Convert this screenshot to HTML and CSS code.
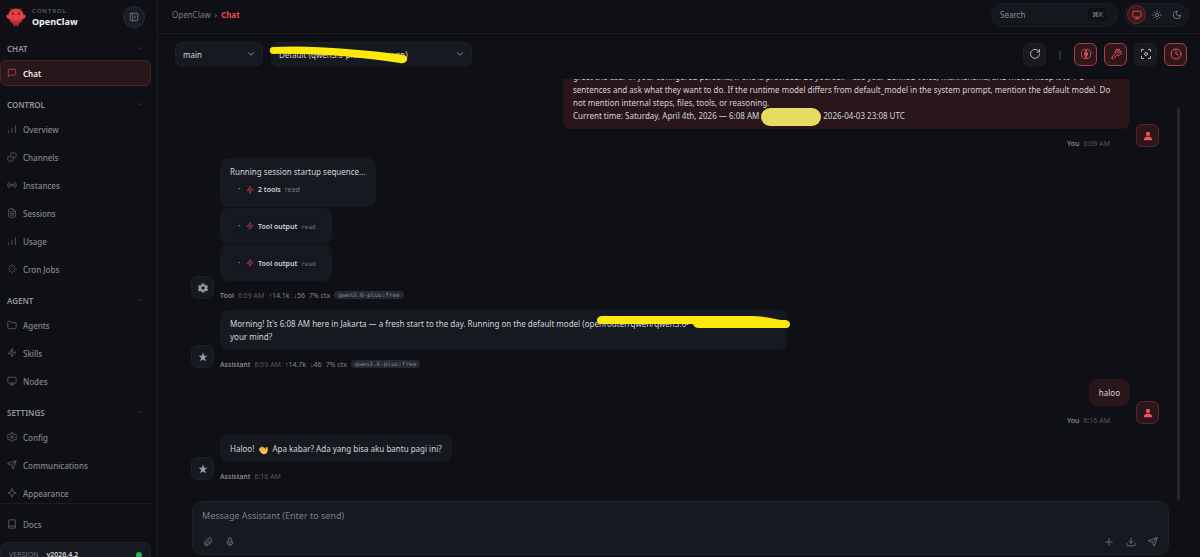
FILE: index.html
```html
<!DOCTYPE html>
<html lang="en">
<head>
  <meta charset="UTF-8" />
  <meta name="viewport" content="width=device-width, initial-scale=1.0"/>
  <title>OpenClaw Control</title>
  <link rel="stylesheet" href="styles.css">
</head>
<body>
  <!-- shared icons -->
  <svg class="sprite" aria-hidden="true">
    <symbol id="i-down" viewBox="0 0 24 24"><path d="m6 9 6 6 6-6"/></symbol>
    <symbol id="i-bars" viewBox="0 0 24 24"><path d="M4 20v-4M12 20V10M20 20V4"/></symbol>
    <symbol id="i-bolt" viewBox="0 0 24 24"><path d="M13 2 3 14h9l-1 8 10-12h-9z"/></symbol>
    <symbol id="i-monitor" viewBox="0 0 24 24"><rect x="2" y="3" width="20" height="14" rx="2"/><path d="M8 21h8M12 17v4"/></symbol>
    <symbol id="i-send" viewBox="0 0 24 24"><path d="m22 2-7 20-4-9-9-4zM22 2 11 13"/></symbol>
    <symbol id="i-user" viewBox="0 0 24 24"><circle cx="12" cy="7" r="5"/><path d="M2 22c0-6 4-9 10-9s10 3 10 9z"/></symbol>
    <symbol id="i-star" viewBox="0 0 24 24"><path d="m12 1 3 8h8l-6.500 5 2.500 9-7-5-7 5 2.500-9L1 9h8z"/></symbol>
  </svg>

  <div class="shell">
    <aside class="sidebar">
      <div class="brand">
        <svg class="logo" viewBox="0 0 40 40">
          <path d="M12 5 9 2M28 5l3-3" stroke="#c93536" stroke-width="2"/>
          <path d="M20 3c9 0 15 6 15 13 4-1 5 1 4 4s-4 4-6 4c-1 5-4 8-8 9v4h-4v-3h-2v3h-4v-4c-4-1-7-4-8-9-2 0-5-1-6-4s0-5 4-4C5 9 11 3 20 3z" fill="#e0403f"/>
          <path d="M33 24c-1 5-4 8-8 9v4h-4v-3h-2v3h-4v-4c-4-1-7-4-8-9 7 5 19 5 26 0z" fill="#b93034"/>
          <circle cx="14" cy="13" r="2" fill="#3a1216"/><circle cx="26" cy="13" r="2" fill="#3a1216"/>
        </svg>
        <div class="brand-text">
          <span class="brand-sub">CONTROL</span>
          <span class="brand-name">OpenClaw</span>
        </div>
        <button class="collapse" aria-label="Collapse sidebar">
          <svg class="icon" viewBox="0 0 24 24"><rect x="3" y="3" width="18" height="18" rx="2"/><path d="M9 3v18M16 9l-3 3 3 3"/></svg>
        </button>
      </div>

      <nav class="nav">
        <section class="nav-group">
          <h2>CHAT <svg class="icon chev"><use href="#i-down"/></svg></h2>
          <a href="#chat" class="active"><svg class="icon" viewBox="0 0 24 24"><path d="M21 15a2 2 0 0 1-2 2H7l-4 4V5a2 2 0 0 1 2-2h14a2 2 0 0 1 2 2z"/></svg>Chat</a>
        </section>
        <section class="nav-group">
          <h2>CONTROL <svg class="icon chev"><use href="#i-down"/></svg></h2>
          <a href="#overview"><svg class="icon"><use href="#i-bars"/></svg>Overview</a>
          <a href="#channels"><svg class="icon" viewBox="0 0 24 24"><path d="M9 8V6a4 4 0 0 1 4-4h5a4 4 0 0 1 4 4v4a4 4 0 0 1-4 4h-3M15 16v2a4 4 0 0 1-4 4H6a4 4 0 0 1-4-4v-4a4 4 0 0 1 4-4h3M9 15l6-6"/></svg>Channels</a>
          <a href="#instances"><svg class="icon" viewBox="0 0 24 24"><circle cx="12" cy="12" r="2"/><path d="M4 5c-3 4-3 10 0 14M8 8c-2 2-2 6 0 8M16 8c2 2 2 6 0 8M20 5c3 4 3 10 0 14"/></svg>Instances</a>
          <a href="#sessions"><svg class="icon" viewBox="0 0 24 24"><path d="M14 2H6a2 2 0 0 0-2 2v16a2 2 0 0 0 2 2h12a2 2 0 0 0 2-2V8zM14 2v6h6M8 13h8M8 17h8M8 9h2"/></svg>Sessions</a>
          <a href="#usage"><svg class="icon"><use href="#i-bars"/></svg>Usage</a>
          <a href="#cron"><svg class="icon" viewBox="0 0 24 24"><path d="M12 2v4M12 18v4M2 12h4M18 12h4M5 5l3 3M16 16l3 3M5 19l3-3M16 8l3-3"/></svg>Cron Jobs</a>
        </section>
        <section class="nav-group">
          <h2>AGENT <svg class="icon chev"><use href="#i-down"/></svg></h2>
          <a href="#agents"><svg class="icon" viewBox="0 0 24 24"><path d="M22 19a2 2 0 0 1-2 2H4a2 2 0 0 1-2-2V5a2 2 0 0 1 2-2h5l2 3h9a2 2 0 0 1 2 2z"/></svg>Agents</a>
          <a href="#skills"><svg class="icon"><use href="#i-bolt"/></svg>Skills</a>
          <a href="#nodes"><svg class="icon"><use href="#i-monitor"/></svg>Nodes</a>
        </section>
        <section class="nav-group">
          <h2>SETTINGS <svg class="icon chev"><use href="#i-down"/></svg></h2>
          <a href="#config"><svg class="icon" viewBox="0 0 24 24"><path d="M10 2h4l1 3 3 1 3-1 2 4-2 3 2 3-2 4-3-1-3 1-1 3h-4l-1-3-3-1-3 1-2-4 2-3-2-3 2-4 3 1 3-1z"/><circle cx="12" cy="12" r="3"/></svg>Config</a>
          <a href="#communications"><svg class="icon"><use href="#i-send"/></svg>Communications</a>
          <a href="#appearance"><svg class="icon" viewBox="0 0 24 24"><path d="M12 2l3 7 7 3-7 3-3 7-3-7-7-3 7-3z"/></svg>Appearance</a>
        </section>
      </nav>

      <div class="side-foot">
        <a href="#docs"><svg class="icon" viewBox="0 0 24 24"><path d="M4 19V5a3 3 0 0 1 3-3h13v20H6a2 2 0 0 1-2-3 3 3 0 0 1 3-2h13"/></svg>Docs</a>
        <div class="version"><span>VERSION</span><b>v2026.4.2</b><i class="dot"></i></div>
      </div>
    </aside>

    <main class="main">
      <header class="topbar">
        <div class="crumbs"><a href="#home">OpenClaw</a><span>›</span><b>Chat</b></div>
        <button class="search"><span>Search</span><kbd>⌘K</kbd></button>
        <div class="themes">
          <button class="on" aria-label="System theme"><svg class="icon"><use href="#i-monitor"/></svg></button>
          <button aria-label="Light theme"><svg class="icon" viewBox="0 0 24 24"><circle cx="12" cy="12" r="4"/><path d="M12 2v2M12 20v2M2 12h2M20 12h2M5 5l1 1M18 18l1 1M5 19l1-1M18 6l1-1"/></svg></button>
          <button aria-label="Dark theme"><svg class="icon" viewBox="0 0 24 24"><path d="M12 3a6 6 0 0 0 9 9 9 9 0 1 1-9-9z"/></svg></button>
        </div>
      </header>

      <div class="controls">
        <div class="pick pick-session">
          <select aria-label="Session"><option>main</option></select>
          <svg class="icon"><use href="#i-down"/></svg>
        </div>
        <div class="pick pick-model">
          <select aria-label="Model"><option>Default (qwen3.6-plus:free · qwen)</option></select>
          <svg class="icon"><use href="#i-down"/></svg>
          <svg class="marker" viewBox="0 0 140 20"><path d="M4 2C40 0 90 4 135 10Q139 12 138 15Q136 19 131 18C90 12 50 8 4 9Q0 8 1 5Q1 2 4 2z"/></svg>
        </div>
        <div class="tools">
          <button aria-label="Refresh"><svg class="icon" viewBox="0 0 24 24"><path d="M21 12a9 9 0 1 1-3-7l3 3M21 3v5h-5"/></svg></button>
          <span class="bar">|</span>
          <button class="on" aria-label="Show thinking"><svg class="icon" viewBox="0 0 24 24"><path d="M12 4C9 1 5 3 5 6c-3 2-3 5-2 7 0 4 2 6 4 7 2 2 4 1 5 0zM12 4c3-3 7-1 7 2 3 2 3 5 2 7 0 4-2 6-4 7-2 2-4 1-5 0zM9 10v4M15 10v4"/></svg></button>
          <button class="on" aria-label="Show tools"><svg class="icon" viewBox="0 0 24 24"><path d="M15 6a1 1 0 0 0 0 2l1 1a1 1 0 0 0 2 0l4-3a6 6 0 0 1-8 8l-7 7a2 2 0 0 1-3-3l7-7a6 6 0 0 1 8-8z"/></svg></button>
          <button aria-label="Focus mode"><svg class="icon" viewBox="0 0 24 24"><circle cx="12" cy="12" r="3"/><path d="M3 7V3h4M17 3h4v4M21 17v4h-4M7 21H3v-4"/></svg></button>
          <button class="on" aria-label="Show cron sessions"><svg class="icon" viewBox="0 0 24 24"><circle cx="12" cy="12" r="10"/><path d="M12 6v6l4 2"/></svg></button>
        </div>
      </div>

      <div class="thread-wrap">
        <div class="thread">
          <article class="msg user">
            <div class="body">
              <div class="bubble wide prompt">
                greet the user in your configured persona, if one is provided. Be yourself - use your defined voice, mannerisms, and mood. Keep it to 1-3<br>
                sentences and ask what they want to do. If the runtime model differs from default_model in the system prompt, mention the default model. Do<br>
                not mention internal steps, files, tools, or reasoning.<br>
                Current time: Saturday, April 4th, 2026 — 6:08 AM<span class="redact"></span>2026-04-03 23:08 UTC
              </div>
              <div class="meta"><b>You</b><time>6:09 AM</time></div>
            </div>
            <span class="avatar"><svg class="glyph"><use href="#i-user"/></svg></span>
          </article>

          <article class="msg">
            <span class="avatar"><svg class="glyph" viewBox="0 0 24 24"><path fill-rule="evenodd" d="M9 1h6l1 4 3 1 3-1 2 5-3 2 3 3-2 5-4-1-2 1-1 3H9l-1-3-2-1-4 1-2-5 3-3-3-2 2-5 3 1 3-1zM12 8a4 4 0 1 0 0 8 4 4 0 0 0 0-8z"/></svg></span>
            <div class="body">
              <div class="bubble startup">
                Running session startup sequence...
                <div class="tool"><i>•</i><svg class="icon"><use href="#i-bolt"/></svg><b>2 tools</b><span>read</span></div>
              </div>
              <div class="bubble output"><div class="tool"><i>•</i><svg class="icon"><use href="#i-bolt"/></svg><b>Tool output</b><code>read</code></div></div>
              <div class="bubble output"><div class="tool"><i>•</i><svg class="icon"><use href="#i-bolt"/></svg><b>Tool output</b><code>read</code></div></div>
              <div class="meta"><b>Tool</b><time>6:09 AM</time><span>↑14.1k</span><span>↓56</span><span>7% ctx</span><code>qwen3.6-plus:free</code></div>
            </div>
          </article>

          <article class="msg">
            <span class="avatar"><svg class="glyph"><use href="#i-star"/></svg></span>
            <div class="body">
              <div class="bubble wide">
                Morning! It's 6:08 AM here in Jakarta — a fresh start to the day. Running on the default model (<span class="covered">openrouter/qwen/qwen3.6-<svg class="marker" viewBox="0 0 194 14"><path d="M4 0H150C175 0 175 4 189 4Q193 5 193 8Q193 12 189 12H102Q97 12 96 8H4Q0 8 0 4Q0 1 4 0z"/></svg></span><br>
                your mind?
              </div>
              <div class="meta"><b>Assistant</b><time>6:09 AM</time><span>↑14.7k</span><span>↓46</span><span>7% ctx</span><code>qwen3.6-plus:free</code></div>
            </div>
          </article>

          <article class="msg user">
            <div class="body">
              <div class="bubble">haloo</div>
              <div class="meta"><b>You</b><time>6:16 AM</time></div>
            </div>
            <span class="avatar"><svg class="glyph"><use href="#i-user"/></svg></span>
          </article>

          <article class="msg">
            <span class="avatar"><svg class="glyph"><use href="#i-star"/></svg></span>
            <div class="body">
              <div class="bubble">Haloo! <svg class="wave" viewBox="0 0 24 24"><path d="M3 8c1-2 3-1 4 0L6 5c1-2 3-1 4 0l1 1c1-2 2-2 4 0l4 4 0-4c1-2 4-1 4 1 1 6 0 11-4 14-4 2-8 1-11-2l-5-6c-1-2 0-3 1-3z" fill="#f6c445"/><path d="m7 8 6 6M10 5l6 6" stroke="#b9822a" stroke-width="1"/></svg> Apa kabar? Ada yang bisa aku bantu pagi ini?</div>
              <div class="meta"><b>Assistant</b><time>6:16 AM</time></div>
            </div>
          </article>
        </div>
        <div class="scrollbar"></div>
      </div>

      <form class="composer">
        <textarea rows="1" aria-label="Message" placeholder="Message Assistant (Enter to send)"></textarea>
        <div class="composer-row">
          <button type="button" aria-label="Attach file"><svg class="icon" viewBox="0 0 24 24"><path d="m21 11-9 9a6 6 0 0 1-8-8l9-9a4 4 0 0 1 6 6l-9 9a2 2 0 0 1-3-3l8-8"/></svg></button>
          <button type="button" aria-label="Voice input"><svg class="icon" viewBox="0 0 24 24"><rect x="9" y="2" width="6" height="13" rx="3"/><path d="M5 10v2a7 7 0 0 0 14 0v-2M12 19v3"/></svg></button>
          <span class="space"></span>
          <button type="button" aria-label="New session"><svg class="icon" viewBox="0 0 24 24"><path d="M12 4v16M4 12h16"/></svg></button>
          <button type="button" aria-label="Export chat"><svg class="icon" viewBox="0 0 24 24"><path d="M2 15v4a2 2 0 0 0 2 2h16a2 2 0 0 0 2-2v-4M7 10l5 5 5-5M12 15V3"/></svg></button>
          <button type="submit" aria-label="Send"><svg class="icon"><use href="#i-send"/></svg></button>
        </div>
      </form>
    </main>
  </div>
</body>
</html>
```
FILE: styles.css
```css
* {
  box-sizing: border-box;
}
body {
  margin: 0;
  font-family: "Noto Sans", "Open Sans", sans-serif;
  font-size: 8px;
  line-height: 13px;
  background: #0e1015;
  color: #d4d5d9;
}
a {
  color: inherit;
  text-decoration: none;
}
button {
  display: flex;
  align-items: center;
  justify-content: center;
  padding: 0;
  border: none;
  background: none;
  color: inherit;
  font: inherit;
  cursor: pointer;
}
.sprite {
  display: none;
}
.icon {
  width: 10px;
  height: 10px;
  flex: none;
  fill: none;
  stroke: currentColor;
  stroke-width: 2;
  stroke-linecap: round;
  stroke-linejoin: round;
}
.shell {
  display: flex;
  height: 100vh;
  overflow: hidden;
}

/* sidebar */
.sidebar {
  width: 158px;
  flex: none;
  display: flex;
  flex-direction: column;
  border-right: 1px solid #191b21;
}
.brand {
  display: flex;
  align-items: center;
  height: 34px;
  margin-bottom: 2px;
  padding: 0 12px 0 6px;
}
.logo {
  width: 20px;
  height: 20px;
  margin-right: 6px;
}
.brand-text {
  flex: 1;
  display: flex;
  flex-direction: column;
}
.brand-sub {
  font-size: 6px;
  line-height: 9px;
  letter-spacing: 1px;
  color: #75777e;
}
.brand-name {
  font-size: 9px;
  line-height: 11px;
  font-weight: 700;
  color: #f4f4f5;
}
.collapse {
  width: 22px;
  height: 22px;
  border: 1px solid #2a2d36;
  border-radius: 50%;
  background: #1a1d25;
  color: #7b7e87;
}
.nav {
  flex: 1;
  min-height: 0;
  overflow: hidden;
}
.nav-group {
  display: flex;
  flex-direction: column;
  gap: 2px;
  margin-bottom: 6px;
}
.nav-group h2 {
  display: flex;
  align-items: center;
  justify-content: space-between;
  height: 24px;
  margin: 0 13px -2px 7px;
  font-size: 8px;
  font-weight: 600;
  color: #94969c;
}
.icon.chev {
  width: 7px;
  height: 7px;
  color: #4a4d55;
}
.nav a,
.side-foot a {
  display: flex;
  align-items: center;
  gap: 6px;
  height: 26px;
  margin-right: 6px;
  padding-left: 6px;
  border: 1px solid transparent;
  border-radius: 6px;
  font-weight: 500;
  color: #85878d;
}
.nav a .icon,
.side-foot a .icon {
  color: #5d6068;
}
.nav a.active {
  background: #28171b;
  border-color: #4c2226;
  font-weight: 600;
  color: #f2f2f3;
}
.nav a.active .icon {
  color: #c8454a;
}
.side-foot {
  height: 54px;
  overflow: hidden;
  flex: none;
  margin-right: 6px;
  padding-top: 7px;
  border-top: 1px solid #1c1e24;
}
.version {
  display: flex;
  align-items: center;
  gap: 8px;
  height: 25px;
  margin-top: 5px;
  padding: 0 8px;
  border: 1px solid #1d2027;
  border-radius: 7px;
  background: #161920;
  font-size: 7px;
}
.version span {
  color: #72757c;
}
.version b {
  flex: 1;
  font-weight: 600;
  color: #d4d5d9;
}
.dot {
  width: 6px;
  height: 6px;
  border-radius: 50%;
  background: #22b455;
}

/* top bar */
.main {
  flex: 1;
  min-width: 0;
  display: flex;
  flex-direction: column;
}
.topbar {
  display: flex;
  align-items: center;
  height: 34px;
  padding: 2px 11px 6px 14px;
  border-bottom: 1px solid #191b21;
}
.crumbs {
  flex: 1;
  display: flex;
  gap: 4px;
  color: #7b7d84;
}
.crumbs b {
  color: #f0484c;
}
.search {
  justify-content: space-between;
  width: 127px;
  height: 24px;
  margin-right: 6px;
  padding: 0 10px 0 8px;
  border: 1px solid #1b1e25;
  border-radius: 12px;
  background: #14171e;
  color: #8a8d94;
}
.search kbd {
  padding: 0 4px;
  border-radius: 4px;
  background: #0f1116;
  font-family: inherit;
  font-size: 7px;
}
.themes {
  display: flex;
  align-items: center;
  gap: 1px;
  height: 24px;
  padding: 0 2px;
  border: 1px solid #1b1e25;
  border-radius: 12px;
  background: #14171e;
}
.themes button {
  width: 19px;
  height: 19px;
  border-radius: 50%;
  color: #85878e;
}
.themes .on {
  border: 1px solid #6b272c;
  background: #3a1a1f;
  color: #ee5055;
}

/* chat controls */
.controls {
  display: flex;
  gap: 8px;
  padding: 8px 13px 13px 17px;
}
.pick {
  position: relative;
  height: 24px;
}
.pick-session {
  width: 88px;
}
.pick-model {
  width: 201px;
}
.pick select {
  width: 100%;
  height: 24px;
  padding: 0 7px;
  appearance: none;
  border: 1px solid #1c1f27;
  border-radius: 6px;
  background: #161920;
  color: #d4d5d9;
  font: inherit;
}
.pick > .icon {
  position: absolute;
  right: 7px;
  top: 7px;
  color: #a5a7ad;
  pointer-events: none;
}
.marker {
  position: absolute;
  fill: #fde80c;
}
.pick .marker {
  left: -2px;
  top: 3px;
  width: 140px;
  height: 20px;
}
.tools {
  display: flex;
  align-items: center;
  gap: 7px;
  margin-left: auto;
}
.tools button {
  width: 23px;
  height: 23px;
  border: 1px solid #1e2027;
  border-radius: 6px;
  background: #181a20;
  color: #b4b6bb;
}
.tools .icon {
  width: 12px;
  height: 12px;
}
.tools .on {
  border-color: #a33f45;
  background: #2f171b;
  color: #ed5358;
}
.bar {
  width: 14px;
  font-size: 9px;
  text-align: center;
  color: #5b7478;
}

/* thread */
.thread-wrap {
  flex: 1;
  min-height: 0;
  display: flex;
}
.thread {
  flex: 1;
  min-width: 0;
  display: flex;
  flex-direction: column;
  justify-content: flex-end;
  gap: 10px;
  overflow: hidden;
  padding: 0 18px 20px 33px;
}
.scrollbar {
  width: 3px;
  margin: 28px 20px 0 0;
  border-radius: 2px;
  background: #25272c;
}
.msg {
  display: flex;
  align-items: flex-end;
  gap: 6px;
}
.avatar {
  display: flex;
  align-items: center;
  justify-content: center;
  flex: none;
  width: 23px;
  height: 23px;
  margin-bottom: 1px;
  border: 1px solid #1c1f26;
  border-radius: 6px;
  background: #161920;
  color: #96989e;
}
.glyph {
  width: 10px;
  height: 10px;
  fill: currentColor;
}
.body {
  flex: 1;
  min-width: 0;
  display: flex;
  flex-direction: column;
  align-items: flex-start;
  gap: 1px;
}
.bubble {
  max-width: 567px;
  padding: 7px 10px;
  border-radius: 8px;
  background: #161920;
  white-space: nowrap;
}
.bubble.wide {
  width: 567px;
}
.bubble.prompt {
  padding-bottom: 6px;
}
.user .body {
  align-items: flex-end;
}
.user .bubble {
  background: #28161b;
}
.user .avatar {
  border-color: #58252a;
  background: #2c161b;
  color: #f0555a;
}
.meta {
  display: flex;
  align-items: center;
  gap: 4px;
  height: 10px;
  margin-top: 8px;
  font-size: 7px;
  color: #84868d;
}
.meta b {
  font-weight: 500;
  color: #94969c;
}
.meta time {
  color: #565961;
}
.meta code {
  padding: 0 4px;
  border-radius: 4px;
  background: #242833;
  font-family: "DejaVu Sans Mono", monospace;
  font-size: 6px;
  line-height: 8px;
}
.user .meta {
  margin-right: 20px;
}
.tool {
  display: flex;
  align-items: center;
  gap: 4px;
  font-size: 7px;
}
.tool i {
  width: 4px;
  font-style: normal;
  font-size: 6px;
  color: #85878e;
}
.tool b {
  font-weight: 600;
}
.tool span,
.tool code {
  color: #777a81;
}
.tool code {
  font-family: "DejaVu Sans Mono", monospace;
  font-size: 6px;
}
.tool .icon {
  width: 8px;
  height: 8px;
  color: #dd4549;
}
.startup {
  padding-bottom: 11px;
}
.startup .tool {
  margin-top: 5px;
  padding-left: 8px;
}
.output {
  padding: 7px 9px;
}
.output .tool {
  height: 22px;
  padding: 0 6px 0 8px;
  border: 1px solid #191c25;
  border-radius: 5px;
  background: #151822;
}
.redact {
  display: inline-block;
  width: 60px;
  height: 18px;
  margin: -3px 2px;
  border-radius: 9px;
  background: #e6dc62;
  vertical-align: middle;
}
.covered {
  position: relative;
}
.covered .marker {
  left: 12px;
  top: -2px;
  width: 194px;
  height: 14px;
}
.wave {
  width: 10px;
  height: 10px;
  margin: 0 2px;
  fill: none;
  vertical-align: middle;
}

/* composer */
.composer {
  margin: 0 31px 2px 34px;
  border: 1px solid #1d2028;
  border-radius: 10px;
  background: #161920;
}
.composer textarea {
  display: block;
  width: 100%;
  height: 27px;
  padding: 7px 9px 4px;
  resize: none;
  overflow: hidden;
  border: none;
  outline: none;
  background: none;
  color: #d4d5d9;
  font: inherit;
  font-size: 9px;
}
.composer textarea::placeholder {
  color: #7c7f86;
}
.composer-row {
  display: flex;
  align-items: center;
  gap: 2px;
  height: 25px;
  padding: 0 5px;
  border-top: 1px solid #191c23;
  color: #74777e;
}
.composer-row button {
  width: 20px;
  height: 20px;
}
.space {
  flex: 1;
}
```
